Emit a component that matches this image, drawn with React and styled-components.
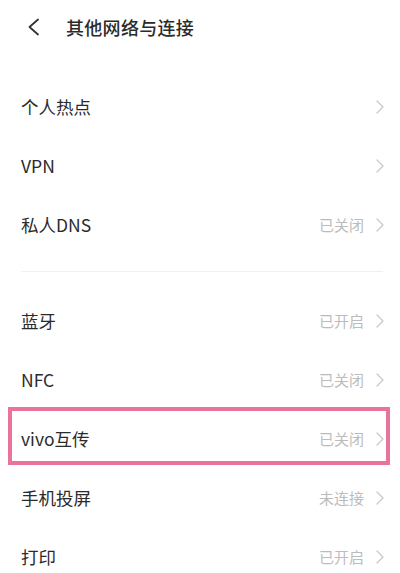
import React from "react";
import styled, { createGlobalStyle } from "styled-components";

const GlobalStyle = createGlobalStyle`
  body {
    margin: 0;
    background: #fff;
    font-family: "Noto Sans CJK SC", "Noto Sans", sans-serif;
    color: #2b2b2b;
  }
`;

const groups = [
  [
    { label: "个人热点" },
    { label: "VPN" },
    { label: "私人DNS", status: "已关闭" },
  ],
  [
    { label: "蓝牙", status: "已开启" },
    { label: "NFC", status: "已关闭" },
    { label: "vivo互传", status: "已关闭", marked: true },
    { label: "手机投屏", status: "未连接" },
    { label: "打印", status: "已开启" },
  ],
];

function Chevron() {
  return (
    <svg width="8" height="14" viewBox="0 0 8 14">
      <polyline
        points="1,1 7,7 1,13"
        fill="none"
        stroke="#c9c9c9"
        strokeWidth="1.3"
        strokeLinecap="round"
        strokeLinejoin="round"
      />
    </svg>
  );
}

export default function App() {
  return (
    <Page>
      <GlobalStyle />
      <Header>
        <BackButton>
          <svg width="13" height="18" viewBox="0 0 13 18">
            <polyline
              points="11,1.5 2.5,9 11,16.5"
              fill="none"
              stroke="#333"
              strokeWidth="1.8"
              strokeLinecap="round"
              strokeLinejoin="round"
            />
          </svg>
        </BackButton>
        <Title>其他网络与连接</Title>
      </Header>
      {groups.map((rows, i) => (
        <React.Fragment key={i}>
          {i > 0 && <Divider />}
          <Group $first={i === 0}>
            {rows.map((row) => (
              <Row key={row.label} $marked={row.marked}>
                <Label>{row.label}</Label>
                <Side>
                  {row.status && <Status>{row.status}</Status>}
                  <Chevron />
                </Side>
              </Row>
            ))}
          </Group>
        </React.Fragment>
      ))}
    </Page>
  );
}

const Page = styled.div`
  width: 400px;
  height: 573px;
  overflow: hidden;
  background: #fff;
`;

const Header = styled.div`
  display: flex;
  align-items: center;
  height: 54px;
  padding-left: 27px;
`;

const BackButton = styled.div`
  display: flex;
  align-items: center;
  width: 13px;
  margin-right: 26px;
`;

const Title = styled.h1`
  margin: 0;
  font-size: 18px;
  font-weight: 500;
  color: #2b2b2b;
  letter-spacing: 0.3px;
`;

const Group = styled.div`
  display: flex;
  flex-direction: column;
  padding-top: ${(p) => (p.$first ? "23px" : "0")};
`;

const Row = styled.div`
  position: relative;
  display: flex;
  align-items: center;
  justify-content: space-between;
  height: 59px;
  padding: 0 16px 0 21px;

  ${(p) =>
    p.$marked &&
    `
    &::after {
      content: "";
      position: absolute;
      left: 8px;
      right: 10px;
      top: -2px;
      bottom: 3px;
      border: 4.5px solid #e9739c;
      pointer-events: none;
    }
  `}
`;

const Label = styled.span`
  font-size: 17.5px;
  color: #2b2b2b;
`;

const Side = styled.div`
  display: flex;
  align-items: center;
  gap: 12px;
`;

const Status = styled.span`
  font-size: 15px;
  color: #bcbcbc;
`;

const Divider = styled.div`
  height: 1px;
  margin: 17px 17px 19px 21px;
  background: #f0f0f0;
`;
